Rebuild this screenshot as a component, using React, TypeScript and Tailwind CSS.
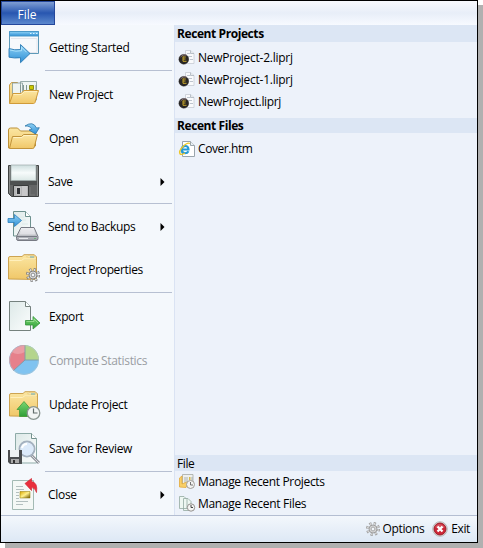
import type { ReactNode } from "react";

function Defs() {
  return (
    <svg className="absolute h-0 w-0" aria-hidden="true">
      <defs>
        <linearGradient id="folder" x1="0" y1="0" x2="0" y2="1">
          <stop offset="0" stopColor="#fbe6a2" />
          <stop offset="1" stopColor="#f0c768" />
        </linearGradient>
        <linearGradient id="blue" x1="0" y1="0" x2="0" y2="1">
          <stop offset="0" stopColor="#8fd2f5" />
          <stop offset="1" stopColor="#2e8fd6" />
        </linearGradient>
        <linearGradient id="paper" x1="0" y1="0" x2="1" y2="1">
          <stop offset="0" stopColor="#dde9e8" />
          <stop offset="1" stopColor="#fbfdfd" />
        </linearGradient>
        <linearGradient id="green" x1="0" y1="0" x2="0" y2="1">
          <stop offset="0" stopColor="#7bd672" />
          <stop offset="1" stopColor="#2f9e37" />
        </linearGradient>
        <linearGradient id="metal" x1="0" y1="0" x2="0" y2="1">
          <stop offset="0" stopColor="#f6f7f9" />
          <stop offset="1" stopColor="#9a9ca5" />
        </linearGradient>
        <linearGradient id="shutter" x1="0" y1="0" x2="0" y2="1">
          <stop offset="0" stopColor="#cddede" />
          <stop offset="0.5" stopColor="#f7fbfb" />
          <stop offset="1" stopColor="#dbe8e6" />
        </linearGradient>
        <linearGradient id="gold" x1="0" y1="0" x2="1" y2="1">
          <stop offset="0" stopColor="#d9a800" />
          <stop offset="0.5" stopColor="#fff08a" />
          <stop offset="1" stopColor="#6f5600" />
        </linearGradient>
      </defs>
    </svg>
  );
}

function ClosedFolder() {
  return (
    <>
      <path d="M.5 27V6q0-1.500 1.500-1.500h12l2-1.800h10l2.500 2V27.500z" fill="url(#folder)" stroke="#c79b43" strokeWidth=".9" />
      <path d="M16 7.500h12M18.500 5l1.500-1.500h6l1 1.500z" fill="#fff5c9" stroke="#e3c67b" strokeWidth=".7" />
      <path d="M22 4.500h4v1h-4z" fill="#65aabd" />
      <path d="M1.500 8.500h12l2-1.500h12" fill="none" stroke="#fff0bd" />
    </>
  );
}

function Gear({ color = "#777", fill = "#dcdcdc" }: { color?: string; fill?: string }) {
  return (
    <>
      <circle r="5.600" fill="none" stroke={color} strokeWidth="2.800" strokeDasharray="2.200 2.200" />
      <circle r="5.300" fill="none" stroke={fill} strokeWidth="1.900" strokeDasharray="1.400 2.760" strokeDashoffset="-.3" />
      <circle r="4" fill={fill} stroke={color} strokeWidth=".9" />
      <circle r="1.900" fill="#f2f6fa" stroke={color} strokeWidth=".8" />
    </>
  );
}

const GettingStarted = (
  <>
    <path d="M1.500.5h29v22h-29z" fill="#f7f9fc" stroke="#5e9ab8" />
    <path d="M1.500.5h29V5h-29z" fill="url(#blue)" stroke="#4a98c8" />
    <path d="M22 2.500h1.500M25 2.500h1.500M28 2.500h1.500" stroke="#d9f4ff" />
    <path d="M3 7.500h26v14H20" fill="none" stroke="#e4e6ed" />
    <path d="M1 17.500q5.500 2 11.500 1v-5L22 22.500l-9.500 9.200v-5q-6 .8-11.500-.5z" fill="url(#blue)" stroke="#2d7cb4" strokeWidth=".9" />
    <path d="M2 19q6 2 11.500.7v-3.500l5 5" fill="none" stroke="#b9e8fc" strokeWidth=".8" />
  </>
);

const NewProject = (
  <>
    <path d="M1.500 26V8l2-2.500h6l2 2v18z" fill="url(#folder)" stroke="#c79b43" />
    <path d="M4.500 6h10v17h-10zM12.500 4.500h16V23h-16z" fill="#eef4f3" stroke="#839b99" strokeWidth=".8" />
    <path d="M12.500 8v7M15.500 8v7M18.500 8v7M28 8v7" stroke="#839895" strokeWidth="1" />
    <path d="M21.500 8.500h4v4h-4z" fill="#c9c800" stroke="#777900" strokeWidth=".8" />
    <path d="M1.500 26.500l3.500-10h8l3-3h14.500L27 25.500q-.5 1-1.500 1z" fill="url(#folder)" stroke="#d09b39" />
    <path d="M5.500 17.500h8l3-3H29" fill="none" stroke="#fff3c8" strokeWidth=".8" />
  </>
);

const Open = (
  <>
    <path d="M.5 27V9q0-2 2-2h7l3 3h15v15z" fill="url(#folder)" stroke="#bc9138" />
    <path d="M1.500 27.500l3-12h9l2-2H29.500l-3.200 12.500q-.3 1.500-1.500 1.500z" fill="url(#folder)" stroke="#c2943b" />
    <path d="M5.500 16.500h8.500l2-2H28" fill="none" stroke="#fff2c4" />
    <path d="M17 5Q25-.5 28.500 7l2.800-.3-3.800 6.300-6.500-4 2.800-.7Q22 4.500 17 5z" fill="url(#blue)" stroke="#2b75a7" strokeWidth=".8" />
  </>
);

const Save = (
  <>
    <path d="M.5.5h30v31H3.500L.5 28.500z" fill="#636565" stroke="#3e4141" />
    <path d="M1.500 1v27M29.500 1v30" stroke="#888b8a" />
    <path d="M3 0h25v15.500H3z" fill="url(#shutter)" stroke="#9eaaa9" strokeWidth=".7" />
    <path d="M2 16h27v4H2z" fill="#4e5151" />
    <path d="M5.500 20.500h15v11h-15z" fill="#b4b5b6" stroke="#383a3a" />
    <path d="M8.500 22.500h4v7h-4z" fill="#303236" stroke="#e8e8e8" strokeWidth=".7" />
    <path d="M14 21v10h5V21z" fill="#c8c8c9" />
    <path d="M22 22v8h5" fill="none" stroke="#777979" />
  </>
);

const Backup = (
  <>
    <path d="M5.500 1.500h12l5 5V26h-17z" fill="url(#paper)" stroke="#6d918e" />
    <path d="M17.500 1.500v5h5" fill="#fff" stroke="#6d918e" />
    <path d="M10 7h6M10 10h8M14 14h6" stroke="#dce9e8" />
    <path d="M0 8.500h6.500v-4l7 6-7 6v-4H0z" fill="url(#blue)" stroke="#287ebe" strokeWidth=".8" />
    <path d="M13 17.500h13l4 9v2q0 2-2 2H10q-1.500 0-1.500-2v-2z" fill="url(#metal)" stroke="#777a83" />
    <path d="M9 26.500h20" stroke="#777a83" />
    <path d="M14 18.500h11l2.500 6H11.500z" fill="#e8e8ed" opacity=".7" />
    <path d="M11 28.500h9" stroke="#e7e9ed" />
    <path d="M26 28.500h2" stroke="#6bb37b" />
  </>
);

const Properties = (
  <>
    <ClosedFolder />
    <g transform="translate(25 23)"><Gear /></g>
  </>
);

const Export = (
  <>
    <path d="M1.500 1.500h16l5 5v24h-21z" fill="url(#paper)" stroke="#75817e" />
    <path d="M17.500 1.500v5h5" fill="#f9ffff" stroke="#75817e" />
    <path d="M17.500 20.500H25v-4l7 6.500-7 6v-4h-7.500z" fill="url(#green)" stroke="#33953b" strokeWidth=".8" />
    <path d="M18.500 21.500H26V19l4 4" fill="none" stroke="#a7e7a0" strokeWidth=".7" />
  </>
);

const Statistics = (
  <>
    <circle cx="16" cy="16" r="15" fill="#80c3f0" />
    <path d="M17 16V1A15 15 0 0 0 5.500 26.500z" fill="#e6808b" />
    <path d="M17 16V1A15 15 0 0 1 31 16z" fill="#b4d58c" />
    <path d="M4 8Q9 1 17 2v6Q9 12 4 8z" fill="#fff" opacity=".23" />
    <path d="M17 1v15h14M17 16L5.500 26.500" fill="none" stroke="#7d9aa5" strokeWidth=".9" />
    <circle cx="16" cy="16" r="14.500" fill="none" stroke="#bbc4c6" strokeWidth=".5" />
  </>
);

const Update = (
  <>
    <g transform="translate(1 1)"><ClosedFolder /></g>
    <path d="M11.500 28.500v-7H9l7-8 7 8h-3.500v7z" fill="url(#green)" stroke="#419b38" strokeWidth=".8" />
    <circle cx="25.500" cy="25" r="6.300" fill="#f3f5f4" stroke="#8b9691" strokeWidth="1.300" />
    <path d="M25.500 20.500V25h4" fill="none" stroke="#626d6b" strokeWidth="1.200" />
  </>
);

const Review = (
  <>
    <path d="M7.500 1.500h16l5 5V31h-21z" fill="url(#paper)" stroke="#8eaba8" />
    <path d="M23.500 1.500v5h5" fill="#fff" stroke="#72908d" />
    <path d="M22 22l9 9" stroke="#92959c" strokeWidth="3" />
    <path d="M22 22l9 9" stroke="#d8dadf" strokeWidth="1" />
    <circle cx="19" cy="17" r="7.500" fill="#eef7fd" stroke="#a4b1bf" strokeWidth="2" />
    <circle cx="19" cy="17" r="6.500" fill="#dceafa" />
    <path d="M14 16q1-4 5-4" stroke="#fff" fill="none" strokeWidth="2" />
    <path d="M0 18h14v14H2l-2-2z" fill="#4b4d4f" />
    <path d="M2 18h9v7H2z" fill="#eef1f2" />
    <path d="M3 27h8v4H3z" fill="#aaa" />
    <path d="M5 28h2v3H5z" fill="#333" />
  </>
);

const Close = (
  <>
    <path d="M4.500 2.500h21v29h-21z" fill="#f4f8f6" stroke="#a3bab4" />
    <path d="M8 8.500h7M8 11.500h8M8 14.500h3M8 17.500h3M8 20.500h3M8 23.500h12M8 26.500h7" stroke="#b3bfbf" />
    <path d="M12 13.500h10v6.500H12z" fill="url(#gold)" stroke="#927900" strokeWidth=".5" />
    <path d="M17 5.500l6.500-5v3q6.500 1 5 11-1.500-5-5-5v3z" fill="#e92f3c" stroke="#d02834" strokeWidth=".7" />
  </>
);

function MenuItem({ icon, label, box, iconAt, textAt, gap = "ml-[9px]", spacing = "tracking-normal", arrow = false, disabled = false }: {
  icon: ReactNode; label: string; box: string; iconAt: string; textAt: string; gap?: string; spacing?: string; arrow?: boolean; disabled?: boolean;
}) {
  return (
    <button className={`flex w-full items-start pl-[7px] text-left ${box}`} disabled={disabled}>
      <svg className={`h-8 w-8 shrink-0 overflow-visible ${iconAt}`} viewBox="0 0 32 32">{icon}</svg>
      <span className={`h-4 whitespace-nowrap leading-4 ${gap} ${textAt} ${spacing} ${disabled ? "text-[#9a9ea3]" : ""}`}>{label}</span>
      {arrow && <span className={`mr-[9px] ml-auto flex h-4 items-center ${textAt}`}><svg className="h-2 w-[5px]" viewBox="0 0 5 8"><path d="M.5 0l4 4-4 4z" /></svg></span>}
    </button>
  );
}

const Divider = () => <hr className="mr-0.5 ml-11 h-px shrink-0 border-0 bg-[#b7c0d2]" />;

function SmallIcon({ kind }: { kind: "project" | "web" | "folders" | "files" | "gear" | "exit" }) {
  return (
    <svg className="h-4 w-4 shrink-0 overflow-visible" viewBox="0 0 16 16">
      {kind === "project" && <>
        <path d="M6.500.5h5l3.500 3v10H6.500z" fill="#f9fafc" stroke="#c6ccd4" strokeWidth=".8" />
        <path d="M11.500.5v3H15" fill="#e6e9ed" stroke="#a9b2bd" strokeWidth=".8" />
        <path d="M8 3.500h3M9 6.500h4M11 9.500h3" stroke="#bdc4ce" />
        <circle cx="4.800" cy="9.300" r="4.900" fill="#292625" stroke="#111" strokeWidth=".4" />
        <path d="M1.500 7q2-3 6-2" stroke="#8b7777" fill="none" />
        <path d="M4 6.500v4.800h3.500M4 7h2.800M4 9h2.500" fill="none" stroke="#c9a72c" strokeWidth="1" />
      </>}
      {kind === "web" && <>
        <path d="M3.500.5h8l4 4v11h-12z" fill="#fff" stroke="#9aa5ad" />
        <path d="M11.500.5v4h4" fill="#e8f0f6" stroke="#9aa5ad" />
        <path d="M3 8.500h6.500Q9.500 5 6.200 5T2.700 8.500 6 12.200q2.500 0 3.500-2" fill="none" stroke="#249bd8" strokeWidth="2.100" />
        <path d="M1 13q-1.500-3 3-7.500t7-3M1 13q2 1 5-1" fill="none" stroke="#edc727" strokeWidth="1.400" />
      </>}
      {kind === "folders" && <>
        <path d="M3.500.5H14v12H3.500z" fill="#eef0ee" stroke="#a5aaa4" strokeWidth=".8" />
        <path d="M6 3v6M8 3v5M13 3v5" stroke="#9aa29d" strokeWidth=".8" />
        <path d="M10 3h1.500v3H10z" fill="#d3b84d" />
        <path d="M.5 13V4l2.500-2v8l5-2 1 .5-2 5z" fill="#f8cf68" stroke="#e2aa3b" strokeWidth=".8" />
        <circle cx="11.500" cy="10.500" r="4" fill="#f3f3f2" stroke="#a09d99" /><path d="M11.500 8v3h2.500" fill="none" stroke="#666" strokeWidth=".9" />
      </>}
      {kind === "files" && <>
        <path d="M.5.500h4.500l3 3v9H.5zM4.500 2.500h4.500l3 3v9H4.500z" fill="#eef7f2" stroke="#93aaa1" strokeWidth=".8" />
        <circle cx="12" cy="11.500" r="3.700" fill="#f5f5f4" stroke="#93918e" /><path d="M12 9v2.500h2" fill="none" stroke="#444" />
      </>}
      {kind === "gear" && <g transform="translate(8 8)"><Gear color="#999" fill="#d5d5d5" /></g>}
      {kind === "exit" && <>
        <circle cx="8" cy="8" r="7.300" fill="#ececec" stroke="#aaa" strokeWidth=".8" />
        <circle cx="8" cy="8" r="6" fill="#cc2737" stroke="#981d29" />
        <path d="M3 6q4-6 10 0-4 3-10 0z" fill="#fff" opacity=".2" />
        <path d="M5.500 5.500l5 5M10.500 5.500l-5 5" stroke="#fff" strokeWidth="2.300" />
      </>}
    </svg>
  );
}

function RecentRow({ kind, spacing, children }: { kind: "project" | "web" | "folders" | "files"; spacing: string; children: ReactNode }) {
  return <div className="flex h-[22px] items-center gap-[3px] pl-1"><SmallIcon kind={kind} /><span className={`whitespace-nowrap leading-4 ${spacing}`}>{children}</span></div>;
}

export default function App() {
  return (
    <div className="h-[548px] w-[483px] overflow-hidden bg-white font-['Open_Sans','Noto_Sans',sans-serif] text-[12px] text-black">
      <Defs />
      <main className="flex h-[543px] w-[478px] flex-col border border-black bg-[#f4f8fc] shadow-[5px_5px_0_0_#b0b0b0]">
        <header className="h-6 shrink-0 bg-linear-to-b from-[#f8f9fd] via-[#e8eef8] to-[#f7faff]">
          <button className="h-6 w-[54px] border border-[#24479b] bg-linear-to-b from-[#7f9dd2] via-[#2856b0] to-[#5c88cd] pt-1 pr-0.5 text-[12px] leading-4 text-white">File</button>
        </header>
        <section className="flex h-[490px] shrink-0 bg-[#f4f8fc]">
          <nav className="flex w-[173px] shrink-0 flex-col">
            <MenuItem icon={GettingStarted} label="Getting Started" box="h-[45px]" iconAt="mt-[6px]" textAt="mt-[15px]" spacing="tracking-[-0.28px]" />
            <Divider />
            <MenuItem icon={NewProject} label="New Project" box="h-[46px]" iconAt="mt-[6px]" textAt="mt-4" spacing="tracking-[-0.3px]" />
            <MenuItem icon={Open} label="Open" box="h-[43px]" iconAt="mt-1" textAt="mt-[14px]" spacing="tracking-[-0.3px]" />
            <MenuItem icon={Save} label="Save" box="h-[43px]" iconAt="mt-[5px]" textAt="mt-[14px]" gap="ml-2" spacing="tracking-[-0.3px]" arrow />
            <Divider />
            <MenuItem icon={Backup} label="Send to Backups" box="h-11" iconAt="mt-[6px]" textAt="mt-[15px]" gap="ml-2" spacing="tracking-[-0.36px]" arrow />
            <MenuItem icon={Properties} label="Project Properties" box="h-11" iconAt="mt-[4px]" textAt="mt-[14px]" spacing="tracking-[-0.36px]" />
            <Divider />
            <MenuItem icon={Export} label="Export" box="h-[46px]" iconAt="mt-[7px]" textAt="mt-4" spacing="tracking-[-0.4px]" />
            <MenuItem icon={Statistics} label="Compute Statistics" box="h-11" iconAt="mt-[5px]" textAt="mt-[14px]" spacing="tracking-[-0.33px]" disabled />
            <MenuItem icon={Update} label="Update Project" box="h-11" iconAt="mt-[5px]" textAt="mt-[14px]" spacing="tracking-[-0.36px]" />
            <MenuItem icon={Review} label="Save for Review" box="h-11" iconAt="mt-[5px]" textAt="mt-[14px]" spacing="tracking-[-0.3px]" />
            <Divider />
            <MenuItem icon={Close} label="Close" box="h-[43px]" iconAt="mt-[6px]" textAt="mt-[15px]" gap="ml-2" spacing="tracking-[-0.3px]" arrow />
          </nav>
          <aside className="flex w-[303px] flex-col border-l border-[#dae3f3] bg-[#edf2fa]">
            <h2 className="h-[17px] bg-[#dce6f4] pl-0.5 text-[12px] leading-[17px] font-bold tracking-[-0.42px]">Recent Projects</h2>
            <div className="h-[76px] shrink-0 pt-[5px]">
              <RecentRow kind="project" spacing="tracking-[-0.26px]">NewProject-2.liprj</RecentRow>
              <RecentRow kind="project" spacing="tracking-[-0.26px]">NewProject-1.liprj</RecentRow>
              <RecentRow kind="project" spacing="tracking-[-0.36px]">NewProject.liprj</RecentRow>
            </div>
            <h2 className="h-[15px] bg-[#dce6f4] pl-0.5 text-[12px] leading-[15px] font-bold tracking-[-0.42px]">Recent Files</h2>
            <div className="grow pt-[5px]"><RecentRow kind="web" spacing="tracking-[-0.42px]">Cover.htm</RecentRow></div>
            <h2 className="h-4 bg-[#dce6f4] pl-0.5 leading-[17px] tracking-[-0.4px]">File</h2>
            <div className="h-11"><RecentRow kind="folders" spacing="tracking-[-0.34px]">Manage Recent Projects</RecentRow><RecentRow kind="files" spacing="tracking-[-0.3px]">Manage Recent Files</RecentRow></div>
          </aside>
        </section>
        <footer className="flex h-[27px] items-center justify-end border-t border-[#b4bed2] bg-linear-to-b from-[#f3f7fc] to-[#dde8f5] pr-[7px] leading-4">
          <button className="flex items-center gap-0.5"><SmallIcon kind="gear" /><span className="tracking-[-0.35px]">Options</span></button>
          <button className="ml-2 flex items-center gap-[3px]"><SmallIcon kind="exit" /><span className="tracking-[-0.4px]">Exit</span></button>
        </footer>
      </main>
    </div>
  );
}
